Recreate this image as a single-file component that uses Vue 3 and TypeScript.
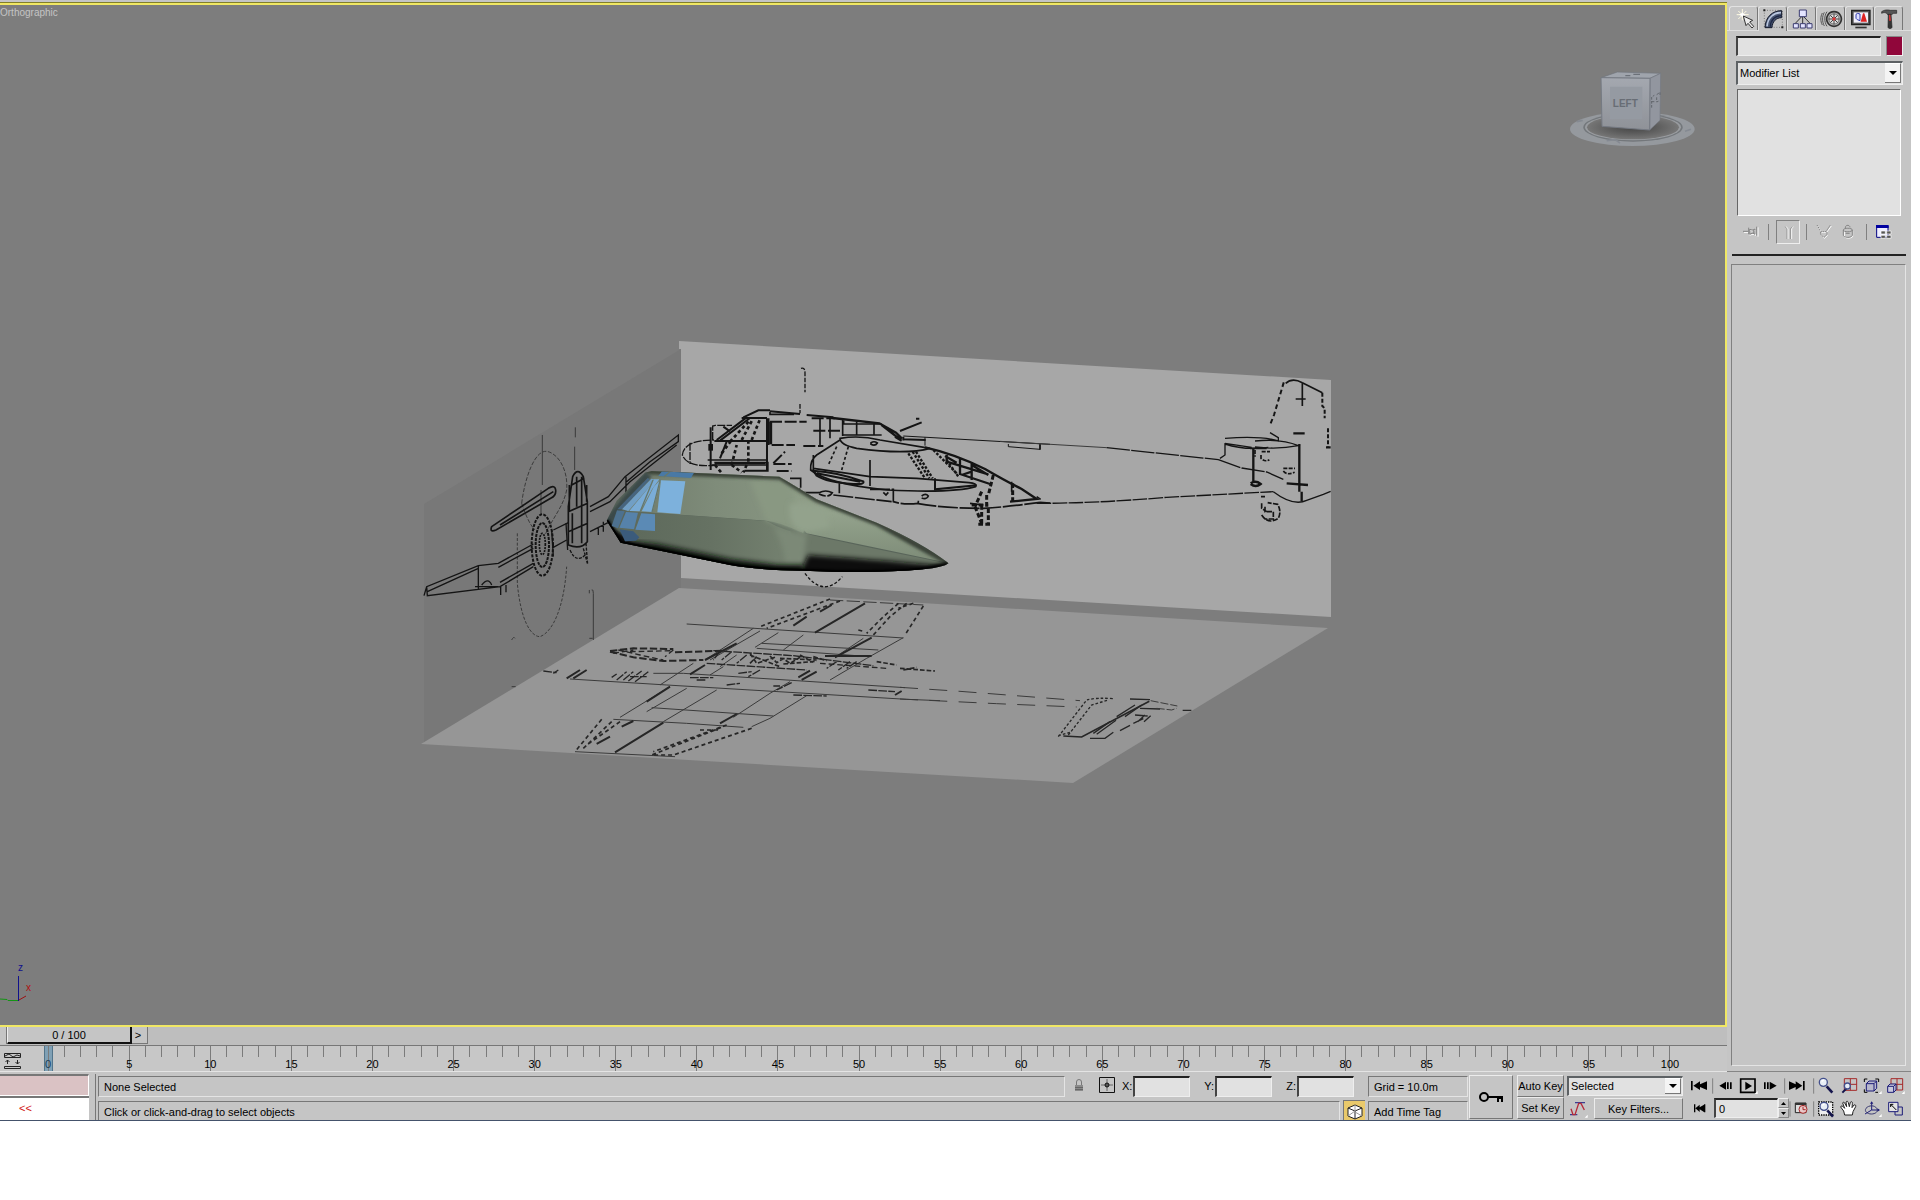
<script setup lang="ts">
import { ref } from 'vue'

interface Stroke {
  d: string
  s?: string
  f?: string
  w?: number
  dash?: string
}
interface Icon {
  name: string
  box: [number, number, number, number]
  parts: Stroke[]
}

const navy = '#1c1c78'
const red = '#a52a2a'
const black = '#000'

const tabs: Icon[] = [
  {
    name: 'Create',
    box: [88, 18, 84, 72],
    parts: [
      { d: 'M125 24v34M108 41h36M113 30l24 24M137 30l-24 24', s: '#fffbe0', w: 3 },
      { d: 'M125 34l4 4 6 3-6 3-4 5-4-5-6-3 6-3z', f: '#fff' },
      { d: 'M128 45l8 29 6-7 12 14 5-5-12-13 9-5z', f: '#ececec', s: '#333', w: 3 },
    ],
  },
  {
    name: 'Modify',
    box: [175, 18, 84, 72],
    parts: [
      { d: 'M191 28h54v51h-54z', s: '#555', w: 2, dash: '3 5' },
      { d: 'M193 80C194 48 215 29 243 29v21c-17 0-28 12-29 30z', f: '#46536f', s: '#151b2c', w: 3 },
      { d: 'M199 76C201 50 219 35 241 35', s: '#b9c6de', w: 5 },
      { d: 'M209 77C210 56 223 44 242 44', s: '#1d2745', w: 4 },
      { d: 'M188 25h6v6h-6zM242 76h6v6h-6z', f: '#222' },
    ],
  },
  {
    name: 'Hierarchy',
    box: [262, 18, 84, 72],
    parts: [
      { d: 'M306 46v22M303 47l-20 21M309 47l20 21', s: '#333', w: 3 },
      { d: 'M296 27h21v20h-21zM278 68h15v13h-15zM299 68h15v13h-15zM319 68h15v13h-15z', f: '#e4e5ff', s: '#3c3d70', w: 3 },
    ],
  },
  {
    name: 'Motion',
    box: [349, 18, 84, 72],
    parts: [
      { d: 'M365 36c-6 11-6 25 0 36M371 34c-7 12-7 28 0 41M379 32c-9 13-9 30 0 44', s: '#555', w: 3 },
      { d: 'M400 32a22 22 0 1 0 .1 0z', f: '#aaa', s: '#333', w: 5 },
      { d: 'M400 39a15 15 0 1 0 .1 0z', f: '#ddd', s: '#555', w: 2 },
      { d: 'M400 38v32M384 54h32M389 43l22 22M411 43l-22 22', s: '#444', w: 3 },
      { d: 'M400 49a5 5 0 1 0 .1 0z', f: '#d33' },
    ],
  },
  {
    name: 'Display',
    box: [436, 18, 84, 72],
    parts: [
      { d: 'M453 28h55v43h-55z', f: '#555', s: '#222', w: 4 },
      { d: 'M459 34h43v31h-43z', f: '#f2f0fa' },
      { d: 'M466 40l5-3 7 2v20l-8-3-4-4z', f: '#dfe0ff', s: '#3540b0', w: 3 },
      { d: 'M480 62l7-25 4 0 8 25z', f: '#d22' },
      { d: 'M464 77h34v5h-34z', f: '#333' },
    ],
  },
  {
    name: 'Utilities',
    box: [523, 18, 84, 72],
    parts: [
      { d: 'M543 32c7-6 18-6 26-4h19v9h-9l-7 4h-11l-3-4c-5-3-10-3-15 0z', f: '#555', s: '#222', w: 2 },
      { d: 'M563 40h8l3 38c0 6-12 6-12 0z', f: '#343434', s: '#222', w: 2 },
      { d: 'M565 41h4l2 18h-6z', f: '#c33' },
    ],
  },
]

const stackIcons: Icon[] = [
  {
    name: 'Pin stack',
    box: [123, 660, 60, 72],
    parts: [
      { d: 'M132 697h16M148 686v20M151 690c5 4 11 4 16 0v16c-5-4-11-4-16 0M174 682v28', s: '#fff', w: 3 },
      { d: 'M129 694h16M146 683v20M149 687c5 4 11 4 16 0v16c-5-4-11-4-16 0zM170 680v27M160 688v14', s: '#858585', w: 3 },
    ],
  },
  {
    name: 'Show end result',
    box: [225, 660, 72, 72],
    parts: [
      { d: 'M252 679l6 6v34M276 679l-6 6v34', s: '#858585', w: 3 },
      { d: 'M255 679l6 6v34M279 679l-6 6v34', s: '#fff', w: 3 },
    ],
  },
  {
    name: 'Make unique',
    box: [342, 660, 54, 72],
    parts: [
      { d: 'M350 678l12 19h15l14-19M360 705l10 10 10-9', s: '#fff', w: 3 },
      { d: 'M348 675l12 20h15l13-20M359 696c-3 8 4 12 10 16 6-5 11-8 8-16', s: '#858585', w: 3, dash: '5 2' },
    ],
  },
  {
    name: 'Remove modifier',
    box: [417, 660, 54, 72],
    parts: [
      { d: 'M430 692v18c7 6 18 6 25 0v-18', s: '#fff', w: 3 },
      { d: 'M427 690c0-7 27-7 27 0s-27 7-27 0zv17c7 7 20 7 27 0v-17M433 684c0-12 14-9 14-2M434 700h12', s: '#858585', w: 3 },
    ],
  },
  {
    name: 'Configure modifier sets',
    box: [522, 660, 60, 72],
    parts: [
      { d: 'M530 678h34v34h-34z', f: '#eef', s: '#000080', w: 3 },
      { d: 'M528 675h38v9h-38z', f: '#0000a0' },
      { d: 'M543 693h13v9h-13zM560 693h13v9h-13zM543 706h13v9h-13zM560 706h13v9h-13z', f: '#555', s: '#fff', w: 2 },
    ],
  },
]

const flyout = (x: number, y: number): Stroke => ({ d: `M${x} ${y}v-9l-9 9z`, f: '#fff' })
const loupe = (x: number, y: number): Stroke[] => [
  { d: `M${x + 10} ${y + 12}l17 19`, s: '#14144c', w: 8 },
  { d: `M${x - 12} ${y}a12 12 0 1 0 24 0a12 12 0 1 0-24 0z`, f: '#e8eef6', s: '#44508c', w: 4 },
  { d: `M${x - 5} ${y - 3}l6-4`, s: '#fff', w: 4 },
]
const top = 198
const low = 264

const playRow: Icon[] = [
  { name: 'Go to start', box: [690, top, 66, 66], parts: [{ d: 'M693 213h5v28h-5zM700 227l20-13v9l21-9v26l-21-9v9z', f: black }] },
  { name: 'Previous frame', box: [756, top, 72, 66], parts: [{ d: 'M758 205v46', s: '#808080', w: 3 }, { d: 'M778 227l20-12v24zM801 217h5v20h-5zM810 217h5v20h-5z', f: black }] },
  { name: 'Play', box: [828, top, 72, 66], parts: [{ d: 'M842 207h43v40h-43z', s: black, w: 5 }, { d: 'M856 215v25l20-12z', f: black }, flyout(893, 252)] },
  { name: 'Next frame', box: [900, top, 72, 66], parts: [{ d: 'M912 217h5v20h-5zM921 217h5v20h-5zM929 215v24l21-12z', f: black }] },
  { name: 'Go to end', box: [972, top, 87, 66], parts: [{ d: 'M974 205v46', s: '#808080', w: 3 }, { d: 'M1034 213h-5v28h5zM1027 227l-20-13v9l-20-9v26l20-9v9z', f: black }] },
]
const navTop: Icon[] = [
  { name: 'Zoom', box: [1059, top, 72, 66], parts: [{ d: 'M1061 205v46', s: '#808080', w: 3 }, ...loupe(1090, 217)] },
  { name: 'Zoom all', box: [1131, top, 72, 66], parts: [{ d: 'M1153 206h37v35h-37zM1171 206v35M1153 223h37', s: red, w: 3 }, { d: 'M1161 234l-14 14', s: '#14144c', w: 6 }, { d: 'M1153 228a9 9 0 1 0 18 0a9 9 0 1 0-18 0z', f: '#e8eef6', s: '#44508c', w: 4 }] },
  { name: 'Zoom extents', box: [1203, top, 69, 66], parts: [{ d: 'M1213 216v-9h9M1246 207h10v9M1213 238v9h9M1246 247h8', s: black, w: 3 }, { d: 'M1219 221l8-8h23v22l-8 8h-23zM1219 221h23v22M1242 221l8-8', f: '#b8b8cc', s: navy, w: 3 }, flyout(1265, 252)] },
  { name: 'Zoom extents all', box: [1272, top, 72, 66], parts: [{ d: 'M1293 206h35v34h-35zM1311 206v34M1293 223h35', s: red, w: 3 }, { d: 'M1283 229l7-7h18v18l-7 7h-18zM1283 229h18v18M1301 229l7-7', f: '#c9c9dc', s: navy, w: 3 }, flyout(1334, 252)] },
]
const keyMode: Icon = { name: 'Key mode', box: [690, low, 66, 60], parts: [{ d: 'M702 280h4v24h-4zM732 280h4v24h-4zM706 292l13-11v8l0 0 13-8v22l-13-8v8z', f: black }] }
const timeConfig: Icon = {
  name: 'Time configuration', box: [987, low, 72, 60],
  parts: [{ d: 'M990 271v46', s: '#808080', w: 3 }, { d: 'M1006 276h32v29h-32z', f: '#ddd', s: '#222', w: 3 }, { d: 'M1006 276h32v6h-32z', f: '#333' }, { d: 'M1017 295a12 12 0 1 0 24 0a12 12 0 1 0-24 0zM1029 287v9h8', f: '#e9c9c9', s: red, w: 3 }],
}
const navLow: Icon[] = [
  { name: 'Region zoom', box: [1059, low, 72, 60], parts: [{ d: 'M1061 271v46', s: '#808080', w: 3 }, { d: 'M1076 273h42v39h-42z', f: '#eee', s: black, w: 4, dash: '4 3' }, ...loupe(1092, 286)] },
  { name: 'Pan', box: [1131, low, 72, 60], parts: [{ d: 'M1154 312l-3-12-9-12c1-5 6-4 9 1l3 3-6-16c2-5 6-2 7 2l5 9-2-14c3-4 6-2 7 2l3 12 3-13c4-4 7-1 6 4l-1 12 6-8c4-2 6 1 5 5l-8 15-2 10z', f: '#fff', s: '#222', w: 3 }] },
  { name: 'Orbit', box: [1203, low, 69, 60], parts: [{ d: 'M1235 297v-23M1235 297l-20 12M1235 297h22', s: navy, w: 3 }, { d: 'M1230 278l5-7 5 7zM1252 292l8 5-8 5z', f: navy }, { d: 'M1218 292c8-10 26-10 32 0s-4 17-16 17-22-8-16-17z', s: '#3a3a70', w: 3 }, flyout(1265, 318)] },
  { name: 'Maximize viewport', box: [1272, low, 72, 60], parts: [{ d: 'M1305 288h22v24h-22z', s: navy, w: 3 }, { d: 'M1286 274h28v28h-28z', f: '#e4e4e4', s: navy, w: 3 }, { d: 'M1292 280l17 17M1292 288v-8h8', s: black, w: 3 }] },
]

const frames = Array.from({ length: 101 }, (_, i) => i)
const axes = ['X', 'Y', 'Z']
const objectName = ref('')
const modifier = ref('Modifier List')
const keySet = ref('Selected')
const frame = ref('0')
const coords = ref<Record<string, string>>({ X: '', Y: '', Z: '' })
const listener = ref('')
</script>

<template>
  <div class="shell">
    <div class="work">
      <main class="stage">
        <div class="toolbar-edge"></div>
        <section class="viewport" aria-label="Orthographic viewport">
          <svg class="scene" viewBox="0 5 1725 1020" aria-hidden="true">
            <defs>
              <clipPath id="hull"><path d="M50 212L80 152 165 68 185 63 568 80Q620 110 680 148L860 218Q1000 280 1076 340 1060 352 1000 358 850 372 640 362 500 360 420 345L200 300 92 278Z" /></clipPath>
              <linearGradient id="upper" x1="0" y1="0" x2="1" y2="0">
                <stop offset="0" stop-color="#6f7b6b" /><stop offset=".5" stop-color="#7f8c7a" /><stop offset="1" stop-color="#899782" />
              </linearGradient>
              <linearGradient id="lower" x1="0" y1="0" x2="1" y2="0">
                <stop offset="0" stop-color="#5c685a" /><stop offset=".5" stop-color="#667263" /><stop offset="1" stop-color="#788573" />
              </linearGradient>
              <linearGradient id="tail" x1="0" y1="0" x2="0" y2="1">
                <stop offset="0" stop-color="#87957f" /><stop offset=".45" stop-color="#93a28c" /><stop offset="1" stop-color="#7d8b77" />
              </linearGradient>
              <filter id="shade" x="-20%" y="-20%" width="140%" height="140%"><feGaussianBlur stdDeviation="8" /></filter>
              <filter id="rim" x="-20%" y="-50%" width="140%" height="200%"><feGaussianBlur stdDeviation="4" /></filter>
            </defs>

            <polygon points="424,504 681,349 681,592 424,743" fill="#787878" />
            <polygon points="679,341 1331,380 1331,617 681,578 681,349 679,349" fill="#a7a7a7" />
            <polygon points="679,588 1328,628 1073,783 421,744" fill="#969696" />

            <g class="ink" transform="translate(410 330) scale(.33333)">
              <path class="fine" stroke-dasharray="12 5" d="M335 520C345 440 375 360 410 364 445 370 475 420 470 480 460 530 430 560 405 615M335 520q20 60 40 80" />
              <path class="fine" stroke-dasharray="9 5" d="M322 610v150c10 110 40 160 68 160 40-15 72-90 80-210" />
              <path class="fine" d="M397 315v150M393 480v75M496 292v30M494 350v70M545 780q5-4 5 10v140M538 780v10M538 925h10M305 930q6-12 10-5M305 1070h12" />
              <path d="M42 797L50 770 205 707 265 700 370 642M430 600L475 578M50 770L52 797 270 770 370 710M430 652L470 630M205 707v70M265 712L370 655M270 757L370 700M205 715L52 785M215 765q20-25 30 0M272 770v25M288 765v22M195 770h70" stroke-width="4" />
              <path d="M540 530L595 500 645 440 805 315V335L720 395 650 455M540 545L600 515 660 455 800 345M540 605L600 575M565 595v20M580 575v30M648 440v60" stroke-width="4" />
              <path d="M245 590L415 475q20-12 22 5t-15 25L258 600q-20 8-13-10zM270 585L430 485" stroke-width="5" />
              <ellipse cx="397" cy="645" rx="32" ry="92" stroke-width="6" stroke-dasharray="9 4" />
              <ellipse cx="397" cy="645" rx="20" ry="66" stroke-width="6" stroke-dasharray="9 3" />
              <ellipse cx="397" cy="642" rx="9" ry="32" stroke-width="5" stroke-dasharray="6 3" />
              <path d="M425 600l5 80M468 580l5 80" stroke-width="4" />
              <path d="M475 645V530L488 440q15-30 32 0l12 75v120q-20 25-57 10zM475 545l58-25M475 605l58-25M485 465l38-20M500 440v90M515 440v200M487 550v90M478 465v80M530 465v50" stroke-width="5" />
              <path d="M480 660q20 45 50 10M528 640l5 65M520 655l12 45" stroke-width="4" stroke-dasharray="9 4" />
            </g>

            <g class="ink" transform="translate(670 330) scale(.33333)">
              <path stroke-width="4" stroke-dasharray="14 4" d="M393 115q12-4 12 14v58M390 222v28" />
              <path stroke-width="4" stroke-dasharray="24 4" d="M128 330v-42l8-2h50M140 405q-88 10-103-30 5-45 95-45M60 338v64" />
              <path stroke-width="6" d="M220 262L265 241H300M300 244l90 8M410 255l80 7" />
              <path stroke-width="5" d="M300 245v8h72M296 265v80M113 390h180M135 400h150" />
              <path stroke-width="6" d="M122 292v128M140 330L230 262M150 332L240 264M160 290l20 14M215 264h76M133 333h155M133 398h160v24h-70M150 385l20-50M291 265v155" />
              <path stroke-width="14" d="M122 342v20" />
              <path stroke-width="9" d="M302 275v68" />
              <path stroke-width="8" stroke-dasharray="10 8" d="M180 335l60-65M215 330l32-60M245 330l24-60M155 370l30-40M185 405l15-60M235 395v-60M185 405l30 22M230 405l-10 22M135 405l20 24" />
              <path stroke-width="6" stroke-dasharray="36 8" d="M300 275h110M305 345h70M400 348h60M425 265h70M430 302h80M320 423h45M310 402h55M310 400l35-35" />
              <path stroke-width="5" d="M450 265v85M480 265v60M518 268v50M560 275v40M612 280v35M520 282h115M520 315h115M125 405h165" />
              <path stroke-width="7" d="M488 264l140 16 50 28 18 18M520 272v10M635 285l55 43M675 320l20 12" />
              <path stroke-width="6" d="M690 303l65-26M738 266h10M697 328l70 2M700 320v12" />
              <path stroke-width="3" d="M700 318l440 25M765 322v25M1015 342v8l95 8v-15" />
              <path stroke-width="5" d="M1110 343v16" />
              <path stroke-width="5" d="M510 325q60-10 120 5l150 25q-70 20-220 0-50-10-50-30zM603 338q10-6 19 1-6 10-19 4zM510 330L440 375q-20 15-18 45 50 42 230 60 200 10 265-10 5-10-20-12L740 445 600 440 430 415M430 375v45" />
              <path stroke-width="6" d="M430 422q70 4 150 32 5 10-30 8-80-5-110-25zM440 430l130 25M795 445v33l125-12" />
              <path stroke-width="5" d="M600 390v78M508 460v30M1025 455v30" />
              <path stroke-width="5" stroke-dasharray="9 7" d="M535 350l-20 70M500 350l-25 55" />
              <path stroke-width="7" stroke-dasharray="8 5" d="M715 370l50 75M728 365l50 80M738 365l50 80M790 360l70 70M830 390l35 50" />
              <path stroke-width="7" d="M765 352q90 20 180 65 60 35 110 60l45 30-80 8M830 375v25M870 385v50M905 400v50M825 378l35 20M905 405l50 30M830 395l125 38M870 432l90 30M905 425l-30 10" />
              <path stroke-width="5" stroke-dasharray="60 5" d="M360 445h32v32h-20M395 488h52M447 488q20-10 40 0-10 18-40 4M490 495l175 20M600 478h70v37q30 10 75 5v-8M755 498q12-10 20 0-6 12-20 6M640 487l8 8 7-8M740 520q80 15 200 15 80-5 170-18M900 520l40 5M1100 500l12 8M1110 517l30 2" />
              <path stroke-width="9" stroke-dasharray="14 7" d="M970 435l-15 60M935 485l-20 45M950 495v35M1028 460v55M915 530l20 50M935 525v58M955 535v48M905 525h50M925 583h35" />
              <path stroke-width="4" stroke-dasharray="9 6" d="M405 730q55 75 112 10" />
            </g>

            <g class="ink" transform="translate(1000 340) scale(.33333)">
              <path class="fine" d="M0 304l320 19" />
              <path stroke-width="4" stroke-dasharray="70 4" d="M320 323l335 36M655 359l70 25 75 12 50 22" />
              <path stroke-width="4" stroke-dasharray="44 4" d="M110 490q180 0 390-18l320-17" />
              <path stroke-width="4" d="M820 455q60 45 100 26l50-18 22-9M675 295q110-8 160 8M675 310l80 12M765 303q80-8 130 14-60 12-130 4M660 355l15-10V312q60 20 130 10M835 303v-10l-25-15" />
              <path stroke-width="6" stroke-dasharray="14 9" d="M812 250l10-25 15-50 15-50" />
              <path stroke-width="5" d="M857 130q20-18 50-2l60 30M907 130v68M887 177h30M750 325h50" />
              <path stroke-width="6" stroke-dasharray="12 6" d="M967 158v40l7 7v30M984 265v55" />
              <path stroke-width="7" d="M898 312v143M880 280h34M905 455v28M978 322h14M760 325v100M752 430q15-10 30 2-15 12-30 0M898 375v60M860 430l64 5" />
              <path stroke-width="5" stroke-dasharray="12 4" d="M785 335h25M783 345v10q12 12 25 4M850 385h35M850 393q10 14 34 4M765 330v20" />
              <path stroke-width="5" stroke-dasharray="16 4" d="M783 470h12M785 490v15l15 10M785 525q20 30 50 10 10-20-2-42l-30-5M795 500v15h25v22h-25" />
            </g>

            <g class="ink floor" transform="translate(520 580) scale(.33333)">
              <path class="fine" d="M500 132l220 14 430 28M725 190l350 20M710 205l340 25M395 383l365 25M400 280h90L1155 323M150 297L440 315 1160 358 1260 362M280 418l220 12 170 12M165 515l300 15" />
              <path class="fine" stroke-dasharray="40 10" d="M930 60l280 15" />
              <path class="fine" d="M700 145L555 240M720 153L570 240M775 158L705 202M850 165L790 210M1030 175L945 232M1150 173L1040 235 930 300M520 250L420 315M590 330L430 425M750 340L640 412M500 325L380 395M450 320L300 412M860 347L750 415 695 440M810 305L750 340M650 225l-50 35M610 260l-40 25" />
              <path stroke-width="6" d="M1035 70L885 158M650 190L555 240M555 255L510 283M450 320L380 365M430 428L285 517M1055 173L945 232M890 275L845 300M870 272L835 292M650 402L600 430M935 75L900 95M860 110L820 137M340 423L305 440M270 470L230 492M200 270L160 295M180 270L140 295M1145 333L1125 345M915 228h140" />
              <path stroke-width="5" stroke-dasharray="12 9" d="M930 57L720 140M960 63L740 145M1160 70L1110 110 1060 165M1135 70L1085 115 1040 160M1210 78L1155 165M1180 70L1135 85M1015 150L1035 155M245 418L165 515M275 425L185 510M300 425L200 495M695 445L460 525 395 525 610 440M620 435L400 515M540 450h60" />
              <path stroke-width="6" stroke-dasharray="22 8" d="M270 215L340 232 430 243 550 240M270 213L340 205 460 207M465 217l145-5" />
              <path stroke-width="4" stroke-dasharray="17 9" d="M295 210L360 225 430 240M460 210L435 230M330 215L460 212M280 220l60-10M900 250l200 15" />
              <path stroke-width="5" stroke-dasharray="14 6" d="M690 220L710 250 770 230M690 225l90 35M780 235l110 5M790 252l100-8M750 228l20 20 20-12 20 14 30-18M880 230l40 12M690 250l20-20M840 225l40 22M1070 245l60 10M1140 265l105 8M1150 270l40-8" />
              <path stroke-width="4" stroke-dasharray="26 4" d="M580 212l240 15 240 30M560 250l300 20M600 215L580 240M635 215L605 240M680 225L650 250M950 245L920 265M990 245L955 270M1010 245l-30 20M510 293h70M530 300h30M655 280l40-5M620 315l40-5M760 318h20M815 308L770 330M1045 330l80 5M820 345l100 3M70 273l40 5M100 280l15-10M310 300l30-25M325 303l40-30M345 305l40-30M290 300l30-25M330 290h50M275 292l15-10M720 270l-35 20" />
            </g>

            <g class="ink floor" transform="translate(900 580) scale(.33333)">
              <path class="fine" stroke-dasharray="54 34" d="M0 322l180 12 360 28M0 357l290 14 240 10" />
              <path stroke-width="4" stroke-dasharray="8 6" d="M475 470L560 360q30-8 80-4M505 465L575 375l50-15M475 467l35-10" />
              <path stroke-width="5" d="M490 468l55 3L748 364" />
              <path stroke-width="4" d="M580 460l50-35M590 463l58-42M705 375L650 410M725 375L675 410M690 357l60 2M720 385l60 2M848 391h26M570 475h45l25-18M660 452l30-16M700 430l30-14M705 405l38 3M735 405l-22 20M752 407l-20 18" />
              <path class="fine" d="M752 362l80 16M770 385l45 5 15-5" stroke-dasharray="24 6" />
            </g>

            <g transform="translate(590 450) scale(.33333)" clip-path="url(#hull)">
              <path d="M40 50h1050v330H40z" fill="#59655a" />
              <path d="M165 60H590L625 110 650 200 640 250Q570 215 530 212L110 183z" fill="url(#upper)" />
              <path d="M110 184L530 213Q590 248 640 250L650 375 250 350 80 250z" fill="url(#lower)" />
              <path d="M560 70L680 140 860 210 1080 340 650 250 600 190z" fill="url(#tail)" />
              <path d="M480 90L600 100 640 250 530 212z" fill="#899882" filter="url(#shade)" />
              <path d="M600 240Q720 270 1076 341L950 356 640 350z" fill="#6c7868" />
              <path d="M600 160Q590 220 635 248L720 230 700 170z" fill="#93a28c" filter="url(#shade)" />
              <path d="M550 230Q590 300 585 350L640 345 650 255z" fill="#7c8977" filter="url(#shade)" />
              <path d="M165 64L570 80 680 148 860 218 1076 338" fill="none" stroke="#3a4238" stroke-width="18" filter="url(#rim)" />
              <path d="M655 315Q800 325 1076 348L1000 390H620z" fill="#0c0f0b" filter="url(#shade)" />
              <path d="M60 285L200 300 420 345 560 362 640 362" fill="none" stroke="#10130f" stroke-width="36" filter="url(#shade)" />
              <path d="M40 212L165 65 185 80 90 182 62 235 90 290 40 290z" fill="#3b4848" filter="url(#rim)" />
              <path d="M50 212L65 235 125 270 92 282z" fill="#0a0e10" filter="url(#rim)" />
              <path d="M50 212L92 278 200 300 420 345Q500 360 640 362 850 372 1000 358L1076 342" fill="none" stroke="#000" stroke-width="12" filter="url(#rim)" />
              <path d="M50 212L92 278 200 300 420 345Q500 360 640 362 850 372 1000 358" fill="none" stroke="#000" stroke-width="10" />
              <path d="M118 140L173 84 180 88 96 178 82 178z" fill="#47657f" />
              <path d="M96 178L184 86 192 88 178 110 115 183z" fill="#719fc5" />
              <path d="M192 88h16L186 118 150 184 118 183 180 108z" fill="#79abd5" />
              <path d="M213 91L286 94 271 192 202 187z" fill="#7db1dc" />
              <path d="M213 88L187 186 155 184 191 111z" fill="#7aadd8" />
              <path d="M81 181L104 184 84 235 65 228z" fill="#4d718f" />
              <path d="M108 186L144 188 132 238 88 233z" fill="#5682aa" />
              <path d="M154 190L195 193V243L136 239z" fill="#5b8ab5" />
              <path d="M88 238L130 244 148 262 138 272 105 274z" fill="#3b5b7b" />
              <path d="M216 64L312 68 303 84 205 78z" fill="#4979a5" />
              <path d="M211 88L186 186M189 90L150 186M240 65L222 80" fill="none" stroke="#66786c" stroke-width="4" />
            </g>

            <path d="M0 999L7 999.500 8 1000.500H18" fill="none" stroke="#149414" />
            <path d="M18.500 976V1001" fill="none" stroke="#10108c" />
            <path d="M19 1000L26 996" fill="none" stroke="#9c1010" />
            <text x="18" y="971" class="axis" fill="#10108c">z</text>
            <text x="26" y="991" class="axis" fill="#b01010">x</text>
          </svg>
          <span class="view-name">Orthographic</span>
          <svg class="cube" viewBox="0 0 540 330" role="img" aria-label="View cube">
            <defs>
              <linearGradient id="face" x1="0" y1="0" x2="0" y2="1"><stop offset="0" stop-color="#a4a8b0" /><stop offset="1" stop-color="#8f9298" /></linearGradient>
              <radialGradient id="drop"><stop offset="0" stop-color="#454545" /><stop offset=".5" stop-color="#5c5c5c" /><stop offset="1" stop-color="#777" /></radialGradient>
            </defs>
            <ellipse cx="277" cy="237" rx="187" ry="51" fill="#95999e" />
            <ellipse cx="279" cy="232" rx="149" ry="43" fill="#73777b" />
            <ellipse cx="279" cy="232" rx="144" ry="39" fill="#999ca0" />
            <ellipse cx="279" cy="232" rx="138" ry="36" fill="url(#drop)" />
            <path d="M110 215l18-4M435 244l18-6M200 272l25-3 15 10" stroke="#858a92" stroke-width="5" fill="none" />
            <path d="M183 83L232 66 362 70 330 85z" fill="#9fa4ac" stroke="#70747b" stroke-width="2" />
            <path d="M256 77h15M280 73h20" stroke="#6c7179" stroke-width="4" />
            <path d="M330 85L362 70 360 211 329 240z" fill="#92969f" stroke="#747982" stroke-width="2" />
            <path d="M183 83L330 85 329 240 186 229z" fill="url(#face)" stroke="#757a83" stroke-width="3" />
            <path d="M210 110h97v97h-97z" fill="#959aa2" />
            <text x="256" y="172" text-anchor="middle" class="face-label">LEFT</text>
            <path d="M335 173v-32l8-5M335 155h8M350 134l10-7v12M350 142v14l9-4" fill="none" stroke="#62666d" stroke-width="3" stroke-dasharray="8 4" />
          </svg>
        </section>

        <div class="slider">
          <span class="slider-end"></span>
          <button class="thumb">0 / 100</button>
          <button class="step">&gt;</button>
        </div>

        <div class="trackbar">
          <button class="curve-toggle" aria-label="Open mini curve editor">
            <svg viewBox="0 0 17 17" width="17" height="17"><path d="M.5 1.500h16v4H.5zM.5 14.500h16v2H.5zM3.500 12V8M1.500 10l2-2 2 2M13.500 8v4M11.500 10l2 2 2-2" fill="none" stroke="#222" /><path d="M1 4l4-2 4 3 4-2 3 1" fill="none" stroke="#222" /></svg>
          </button>
          <div class="ruler">
            <div v-for="n in frames" :key="n" class="tick" :class="{ major: n % 5 === 0, current: n === 0 }">
              <span v-if="n % 5 === 0">{{ n }}</span>
            </div>
          </div>
        </div>
      </main>

      <aside class="panel">
        <nav class="tabs" aria-label="Command panel">
          <button v-for="(t, i) in tabs" :key="t.name" :aria-label="t.name" :class="{ active: i === 1 }">
            <svg :viewBox="t.box.join(' ')" :width="t.box[2] / 3" :height="t.box[3] / 3">
              <path v-for="(p, k) in t.parts" :key="k" :d="p.d" :fill="p.f ?? 'none'" :stroke="p.s ?? 'none'" :stroke-width="p.w" :stroke-dasharray="p.dash" />
            </svg>
          </button>
        </nav>
        <div class="panel-body">
          <div class="name-row">
            <input v-model="objectName" class="sunken" aria-label="Object name" />
            <button class="swatch" aria-label="Object color"></button>
          </div>
          <div class="combo tall">
            <select v-model="modifier" aria-label="Modifier List"><option>Modifier List</option></select>
            <span class="drop"></span>
          </div>
          <div class="stack" aria-label="Modifier stack"></div>
          <div class="stack-tools">
            <template v-for="(t, i) in stackIcons" :key="t.name">
              <i v-if="i === 1 || i === 2 || i === 4" class="divider"></i>
              <button :aria-label="t.name" :class="{ pressed: i === 1 }">
                <svg :viewBox="t.box.join(' ')" :width="t.box[2] / 3" :height="t.box[3] / 3">
                  <path v-for="(p, k) in t.parts" :key="k" :d="p.d" :fill="p.f ?? 'none'" :stroke="p.s ?? 'none'" :stroke-width="p.w" :stroke-dasharray="p.dash" />
                </svg>
              </button>
            </template>
          </div>
        </div>
        <hr class="rule" />
        <div class="rollout"></div>
      </aside>
    </div>

    <footer class="status">
      <div class="listener">
        <input v-model="listener" class="macro" aria-label="Macro recorder" />
        <button class="script">&lt;&lt;</button>
      </div>
      <div class="info">
        <div class="line">
          <div class="box grow">None Selected</div>
          <button class="lock" aria-label="Selection lock">
            <svg viewBox="0 0 10 13" width="10" height="13"><path d="M2.500 6V3q0-2.500 2.500-2.500T7.500 3v3" fill="none" stroke="#777" /><path d="M1 6h8v6H1z" fill="#8a8a8a" /><path d="M1 8.500h8M1 10.500h8" stroke="#666" /></svg>
          </button>
          <button class="abs" aria-label="Absolute mode">
            <svg viewBox="0 0 16 16" width="16" height="16"><path d="M.5.5h15v15H.5z" fill="none" stroke="#111" /><path d="M8 2v12M2 8h12" stroke="#666" /><circle cx="8" cy="8" r="2" fill="#555" stroke="#111" /></svg>
          </button>
          <label v-for="a in axes" :key="a" class="coord">{{ a }}:<input v-model="coords[a]" class="sunken" /></label>
        </div>
        <div class="line">
          <div class="box grow open">Click or click-and-drag to select objects</div>
          <button class="adaptive" aria-label="Adaptive degradation">
            <svg viewBox="0 0 16 16" width="16" height="16"><path d="M8 1l7 3v8l-7 3-7-3V4z" fill="#fff" stroke="#222" /><path d="M1 4l7 3 7-3M8 7v8" fill="none" stroke="#222" /><path d="M8 1v6L1 12M8 8l7 4" fill="none" stroke="#999" /></svg>
          </button>
        </div>
      </div>
      <div class="tags">
        <div class="box">Grid = 10.0m</div>
        <button class="box open">Add Time Tag</button>
      </div>
      <button class="raised key" aria-label="Set keys">
        <svg viewBox="0 0 24 12" width="24" height="12"><circle cx="5" cy="6" r="4" fill="none" stroke="#000" stroke-width="2" /><path d="M9 5h15v6h-2V8h-2v3h-2V7H9z" fill="#000" /></svg>
      </button>
      <div class="keys">
        <button class="raised">Auto Key</button>
        <button class="raised">Set Key</button>
      </div>
      <div class="filters">
        <div class="combo">
          <select v-model="keySet" aria-label="Key selection set"><option>Selected</option></select>
          <span class="drop"></span>
        </div>
        <div class="filter-row">
          <button class="tangent" aria-label="Default tangents">
            <svg viewBox="328 270 60 54" width="20" height="18"><path d="M331 314h22M346 278h30" stroke="#3c3c90" stroke-width="4" /><path d="M334 296l6 18h6l11-34h7l10 20" fill="none" stroke="#b52a3a" stroke-width="4" /><path d="M384 323v-9l-9 9z" fill="#fff" /></svg>
          </button>
          <button class="raised">Key Filters...</button>
        </div>
      </div>
      <div class="controls">
        <div class="icons">
          <button v-for="t in [...playRow, ...navTop]" :key="t.name" :aria-label="t.name">
            <svg :viewBox="t.box.join(' ')" :width="t.box[2] / 3" :height="t.box[3] / 3">
              <path v-for="(p, k) in t.parts" :key="k" :d="p.d" :fill="p.f ?? 'none'" :stroke="p.s ?? 'none'" :stroke-width="p.w" :stroke-dasharray="p.dash" />
            </svg>
          </button>
        </div>
        <div class="icons">
          <button :aria-label="keyMode.name">
            <svg :viewBox="keyMode.box.join(' ')" width="22" height="20"><path v-for="(p, k) in keyMode.parts" :key="k" :d="p.d" :fill="p.f" /></svg>
          </button>
          <input v-model="frame" class="sunken frame" aria-label="Current frame" />
          <span class="spin">
            <button aria-label="Next"><svg viewBox="0 0 5 3" width="5" height="3"><path d="M0 3L2.500 0 5 3z" /></svg></button>
            <button aria-label="Previous"><svg viewBox="0 0 5 3" width="5" height="3"><path d="M0 0l2.500 3L5 0z" /></svg></button>
          </span>
          <button v-for="t in [timeConfig, ...navLow]" :key="t.name" :aria-label="t.name">
            <svg :viewBox="t.box.join(' ')" :width="t.box[2] / 3" :height="t.box[3] / 3">
              <path v-for="(p, k) in t.parts" :key="k" :d="p.d" :fill="p.f ?? 'none'" :stroke="p.s ?? 'none'" :stroke-width="p.w" :stroke-dasharray="p.dash" />
            </svg>
          </button>
        </div>
      </div>
    </footer>
  </div>
</template>

<style>
body {
  background: #fff;
}
</style>

<style scoped>
* {
  box-sizing: border-box;
}
.shell {
  display: flex;
  flex-direction: column;
  min-height: calc(100vh - 79px);
  margin-right: 9px;
  overflow: hidden;
  background: #c5c5c5;
  border-bottom: 1px solid #44526b;
  font: 11px/14px "Liberation Sans", Arial, sans-serif;
  color: #000;
}
button,
input,
select {
  margin: 0;
  padding: 0;
  border: 0;
  border-radius: 0;
  background: none;
  font: inherit;
  color: inherit;
  outline: none;
}
svg {
  display: block;
  flex: none;
}
.work {
  display: flex;
  flex: 1;
}
.stage {
  display: flex;
  flex: 1;
  flex-direction: column;
  min-width: 0;
}
.toolbar-edge {
  height: 3px;
  background: #c5c5c5;
  border-bottom: 1px solid #82802a;
}
.viewport {
  position: relative;
  flex: 1;
  min-height: 400px;
  overflow: hidden;
  background: #7d7d7d;
  border: solid #f0e764;
  border-width: 2px 2px 2px 0;
}
.scene {
  position: absolute;
  inset: 0;
  width: 100%;
  height: 100%;
}
.ink {
  fill: none;
  stroke: #141414;
}
.ink.floor {
  stroke: #262626;
}
.ink .fine {
  stroke: #3a3a3a;
  stroke-width: 3;
}
.axis {
  font-size: 10px;
}
.view-name {
  position: absolute;
  top: 1px;
  left: 0;
  font-size: 10px;
  color: #c4c4c4;
}
.cube {
  position: absolute;
  top: 45px;
  right: 5px;
  width: 180px;
  height: 110px;
}
.face-label {
  font: bold 30px "Liberation Sans", Arial, sans-serif;
  fill: #686d75;
}

.slider {
  display: flex;
  height: 19px;
  padding-bottom: 1px;
  background: #bebebe;
  border-bottom: 1px solid #777;
}
.slider-end {
  width: 7px;
  background: #c5c5c5;
  border-right: 1px solid #777;
}
.thumb {
  width: 125px;
  background: #c5c5c5;
  border: solid;
  border-width: 0 2px 2px 1px;
  border-color: #111 #111 #111 #eee;
}
.step {
  width: 16px;
  padding-right: 3px;
  background: #c5c5c5;
  border: solid #777;
  border-width: 0 1px 1px 0;
}
.trackbar {
  display: flex;
  height: 26px;
  padding-right: 49px;
  background: #c7c7c7;
  border-bottom: 1px solid #e4e4e4;
}
.curve-toggle {
  width: 40px;
  padding: 4px 0 0 4px;
}
.ruler {
  display: flex;
  flex: 1;
}
.tick {
  position: relative;
  display: flex;
  flex: 1 0 0;
  justify-content: center;
  min-width: 0;
}
.tick::before {
  position: absolute;
  top: 0;
  width: 1px;
  height: 11px;
  background: #7b7b7b;
  content: "";
}
.tick.major::before {
  height: 25px;
}
.tick span {
  position: relative;
  padding-top: 11px;
}
.tick.current {
  background:
    linear-gradient(#7fa0b5, #7fa0b5) center / 7px 100% no-repeat,
    linear-gradient(#52748a, #52748a) center / 9px 100% no-repeat;
  color: #1a3d55;
}

.panel {
  display: flex;
  flex: 0 0 184px;
  flex-direction: column;
  padding: 6px 0 0;
  border-bottom: 1px solid #858585;
}
.tabs {
  display: flex;
  height: 25px;
  padding-left: 2px;
  border-bottom: 1px solid #dedede;
}
.tabs button {
  width: 29px;
  border: solid;
  border-width: 1px 1px 0;
  border-color: #e2e2e2 #777 #777 #e2e2e2;
  border-radius: 3px 3px 0 0;
}
.tabs button.active {
  height: 25px;
  background: #c5c5c5;
}
.panel-body {
  padding: 5px 8px 0 9px;
}
.sunken {
  min-width: 0;
  background: #e1e1e1;
  border: solid;
  border-width: 2px 1px 1px 2px;
  border-color: #222 #eee #eee #444;
}
.name-row {
  display: flex;
  gap: 5px;
  height: 20px;
}
.name-row input {
  flex: 1;
}
.swatch {
  width: 17px;
  background: #90063a;
  border: 1px solid;
  border-color: #888 #eee #eee #888;
}
.combo {
  display: flex;
  height: 20px;
  padding: 0 1px 1px 0;
  background: #e1e1e1;
  border: solid;
  border-width: 2px 1px 1px 2px;
  border-color: #5d6164 #eee #eee #5d6164;
}
.combo.tall {
  height: 24px;
  margin-top: 5px;
}
.combo select {
  flex: 1;
  min-width: 0;
  padding-left: 2px;
  appearance: none;
}
.drop {
  display: flex;
  align-items: center;
  justify-content: center;
  width: 16px;
  background: #f4f4f4;
  border: solid;
  border-width: 1px 1px 1px 0;
  border-color: #fff #777 #777;
}
.drop::before {
  border: 4px solid transparent;
  border-top-color: #000;
  border-bottom: 0;
  content: "";
}
.stack {
  height: 127px;
  margin: 4px 2px 0 1px;
  background: #e1e1e1;
  border: 1px solid;
  border-color: #666 #fff #fff #666;
}
.stack-tools {
  display: flex;
  align-items: center;
  justify-content: space-between;
  height: 24px;
  margin: 4px 9px 0 5px;
}
.pressed {
  margin: -1px;
  border: 1px solid;
  border-color: #808080 #eee #eee #808080;
}
.pressed svg {
  width: 22px;
  height: 22px;
}
.divider {
  width: 1px;
  height: 16px;
  background: #808080;
}
.rule {
  height: 2px;
  margin: 10px 5px 8px;
  background: #222;
  border: 0;
}
.rollout {
  flex: 1;
  margin: 0 5px 5px 4px;
  border: 1px solid;
  border-color: #808080 #e4e4e4 #e4e4e4 #808080;
}

.status {
  display: flex;
  height: 48px;
  padding-top: 2px;
}
.listener {
  display: flex;
  flex: 0 0 96px;
  flex-direction: column;
  border-right: 1px solid #777;
}
.macro {
  width: 89px;
  height: 22px;
  background: #dac2c4;
  border: solid;
  border-width: 2px 1px 1px 0;
  border-color: #777 #fff #fff;
}
.script {
  width: 89px;
  flex: 1;
  padding: 0 38px 3px 0;
  background: #fff;
  border-top: 2px solid #777;
  color: #d21414;
}
.info {
  display: flex;
  flex: 1;
  flex-direction: column;
  gap: 4px;
  min-width: 0;
  padding: 2px 0 0 2px;
}
.line {
  display: flex;
  height: 21px;
}
.box {
  height: 21px;
  padding: 3px 5px;
  border: 1px solid;
  border-color: #777 #e4e4e4 #e4e4e4 #777;
  text-align: left;
  white-space: nowrap;
}
.box.open {
  border-bottom: 0;
}
.grow {
  flex: 1;
}
.lock {
  padding: 3px 0 0;
  margin: 0 15px 5px 9px;
}
.abs {
  margin: 1px 7px 4px 0;
}
.coord {
  display: flex;
  align-items: flex-start;
  width: 82px;
  gap: 1px;
  line-height: 20px;
  justify-content: flex-end;
  padding-right: 14px;
}
.coord input {
  width: 57px;
  height: 21px;
}
.adaptive {
  display: flex;
  align-items: center;
  justify-content: center;
  width: 22px;
  margin: -1px 3px 0;
  background: #e9c96b;
  border: solid;
  border-width: 1px 0 0 1px;
  border-color: #777;
}
.tags {
  display: flex;
  flex: 0 0 100px;
  flex-direction: column;
  gap: 4px;
  padding-top: 2px;
}
.raised {
  background: #c5c5c5;
  border: 1px solid;
  border-color: #ececec #777 #777 #ececec;
  white-space: nowrap;
}
.key {
  display: flex;
  align-items: center;
  justify-content: center;
  width: 44px;
  height: 44px;
  margin: 1px 4px 0 1px;
}
.keys {
  display: flex;
  flex: 0 0 47px;
  flex-direction: column;
  margin-top: 1px;
}
.keys .raised {
  height: 22px;
}
.filters {
  display: flex;
  flex: 0 0 126px;
  flex-direction: column;
  gap: 2px;
  padding: 2px 7px 0 3px;
}
.filter-row {
  display: flex;
  gap: 5px;
}
.filter-row .raised {
  flex: 1;
  height: 21px;
}
.tangent {
  margin-left: 2px;
}
.controls {
  flex: 0 0 221px;
  padding-top: 2px;
}
.icons {
  display: flex;
  height: 22px;
}
.icons svg {
  overflow: visible;
}
.frame {
  width: 64px;
  height: 20px;
  margin-left: 2px;
  padding-left: 3px;
}
.spin {
  display: flex;
  flex-direction: column;
  width: 11px;
}
.spin button {
  display: flex;
  align-items: center;
  justify-content: center;
  height: 10px;
  border: 1px solid;
  border-color: #eee #888 #888 #eee;
}
</style>
